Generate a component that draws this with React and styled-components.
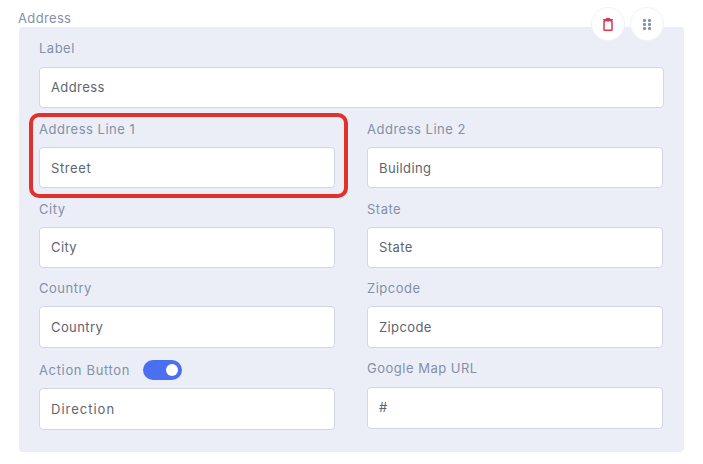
import React from "react";
import styled, { createGlobalStyle } from "styled-components";

const Global = createGlobalStyle`
  html, body { margin: 0; padding: 0; background: #fff; }
  body { font-family: "Inter", "Noto Sans", "Liberation Sans", sans-serif; }
`;
const Page = styled.div`
  width: 703px; height: 464px; box-sizing: border-box; padding: 9px 19px 0; overflow: hidden;
`;
const Heading = styled.div`
  font-size: 13px; line-height: 18px; color: #8490a8; letter-spacing: 0.35px; margin-left: -1px;
`;
const Panel = styled.section`
  position: relative; box-sizing: border-box; width: 665px; height: 425px;
  background: #ebeef7; border-radius: 4px; padding: 12px 20px 0;
`;
const Actions = styled.div`
  position: absolute; top: -20px; right: 20px; display: flex; gap: 5px;
`;
const Circle = styled.button`
  width: 34px; height: 34px; padding: 0; border-radius: 50%; border: 1px solid #f1f2f8; background: #fff;
  display: flex; align-items: center; justify-content: center; color: ${p => p.$color};
`;
const FullRow = styled.div` margin-bottom: 11px; `;
const Grid = styled.div`
  display: grid; grid-template-columns: 296px 296px; column-gap: 32px; row-gap: 11px; align-items: start;
`;
const Field = styled.div`
  display: flex; flex-direction: column; position: relative;
  margin-top: ${p => p.$mt || 0}px;
`;
const LabelRow = styled.div`
  display: flex; align-items: center; gap: 13px; height: ${p => p.$h || 19}px; margin-bottom: ${p => p.$mb ?? 9}px;
  padding-top: ${p => p.$pt || 0}px; box-sizing: border-box;
`;
const Label = styled.label`
  font-size: 13px; line-height: 19px; color: #8490a8; letter-spacing: ${p => p.$ls ?? 0.5}px;
`;
const Input = styled.div`
  box-sizing: border-box; height: ${p => p.$h || 41}px; background: #fff; border: 1px solid #d3d7e4; border-radius: 4px;
  padding: 0 11px ${p => p.$pb ?? 1}px; display: flex; align-items: center;
  font-size: 13px; color: #5f6470; letter-spacing: ${p => p.$ls ?? 0.4}px;
`;
const Toggle = styled.div`
  width: 39px; height: 20px; border-radius: 10px; background: #4a6ff0; position: relative;
  &::after { content: ""; position: absolute; top: 4px; right: 4px; width: 12px; height: 12px; border-radius: 50%; background: #fff; }
`;
const Highlight = styled.div`
  position: absolute; left: -10px; top: -6px; width: 319px; height: 85px; box-sizing: border-box;
  border: 4px solid #e2312d; border-radius: 10px; pointer-events: none;
`;

const TrashIcon = () => (
  <svg width="10" height="13" viewBox="0 0 10 13" fill="none" stroke="currentColor">
    <path d="M0 1.5h10M3 .5h4" strokeWidth="1.2" />
    <rect x="1" y="2.8" width="8" height="9.4" rx="0.5" strokeWidth="1.5" />
  </svg>
);
const GripIcon = () => (
  <svg width="8" height="11" viewBox="0 0 8 11" fill="currentColor">
    {[0, 4, 8].map(y => [0, 5].map(x => <rect key={`${x}-${y}`} x={x} y={y} width="3" height="3" rx="1" />))}
  </svg>
);

const F = ({ label, value, children, $h, $mb, $mt, $pt, inputH, $pb, $ls, $lls }) => (
  <Field $mt={$mt}>
    <LabelRow $h={$h} $mb={$mb} $pt={$pt}><Label $ls={$lls}>{label}</Label>{children}</LabelRow>
    <Input $h={inputH} $pb={$pb} $ls={$ls}>{value}</Input>
  </Field>
);

export default function App() {
  return (
    <Page>
      <Global />
      <Heading>Address</Heading>
      <Panel>
        <Actions>
          <Circle $color="#e2344f"><TrashIcon /></Circle>
          <Circle $color="#8491ab"><GripIcon /></Circle>
        </Actions>
        <FullRow><F label="Label" value="Address" /></FullRow>
        <Grid>
          <Field>
            <LabelRow $pt={1}><Label>Address Line 1</Label></LabelRow>
            <Input $pb={0} $ls={0.6}>Street</Input>
            <Highlight />
          </Field>
          <F label="Address Line 2" value="Building" $pt={1} $pb={0} />
          <F label="City" value="City" $pt={1} />
          <F label="State" value="State" $pt={1} />
          <F label="Country" value="Country" inputH={42} $mt={-1} $h={19} $pt={1} />
          <F label="Zipcode" value="Zipcode" inputH={42} $mt={-1} $h={19} $pt={1} />
          <F label="Action Button" value="Direction" $h={21} $pt={1} $mb={8} inputH={42} $pb={1} $ls={1} $lls={0.65}><Toggle /></F>
          <F label="Google Map URL" value="#" $h={19} $mb={9} inputH={42} $pb={2} />
        </Grid>
      </Panel>
    </Page>
  );
}
